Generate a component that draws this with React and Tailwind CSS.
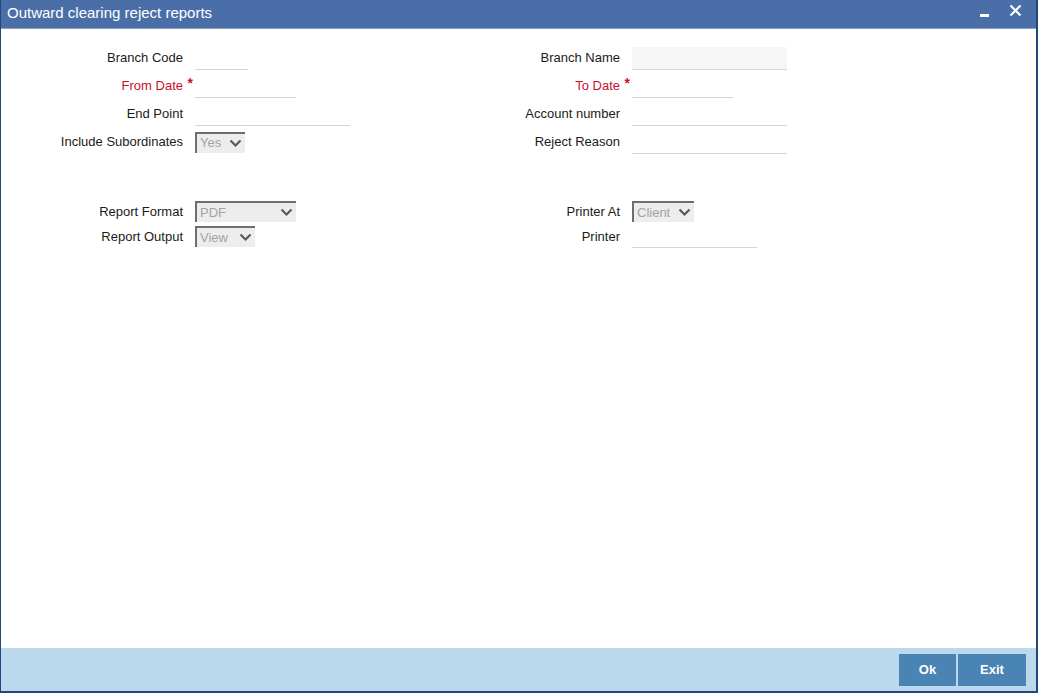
import React from 'react';

const font = { fontFamily: '"Liberation Sans", Arial, sans-serif' };

function Chevron() {
  return (
    <svg width="13" height="9" viewBox="0 0 13 9" className="shrink-0">
      <path d="M1.5 1.5 L6.5 6.5 L11.5 1.5" fill="none" stroke="#5a5a5a" strokeWidth="2.2" />
    </svg>
  );
}

function Select({ value, width }) {
  return (
    <div
      className="flex h-[21px] items-center justify-between border-t-2 border-l-2 border-t-[#6e6e6e] border-l-[#6e6e6e] bg-[#ededeb] pl-[3px] pr-[3px] text-[13px] text-[#a3a3a3]"
      style={{ width }}
    >
      <span>{value}</span>
      <Chevron />
    </div>
  );
}

function Input({ width, filled }) {
  return (
    <div
      className={`h-[23px] border-b border-[#d6d6d6] ${filled ? 'bg-[#f6f6f6]' : ''}`}
      style={{ width }}
    />
  );
}

function Row({ label, required, children, h = 'h-[28px]' }) {
  return (
    <div className={`flex ${h} items-center`}>
      <div className={`relative w-[182px] text-right text-[13px] ${required ? 'text-[#c8102e]' : 'text-[#1a1a1a]'}`}>
        {label}
        {required && <span className="absolute -right-[10px] -top-[3px] text-[14px] font-bold text-[#c8102e]">*</span>}
      </div>
      <div className="ml-[12px]">{children}</div>
    </div>
  );
}

export default function App() {
  return (
    <div className="flex h-[693px] w-[1038px] flex-col overflow-hidden border-b-2 border-l border-r-2 border-[#23467c] bg-white" style={font}>
      <div className="flex h-[29px] shrink-0 items-center justify-between border-b border-[#8aa0b8] bg-[#4a6fa8] pl-[6px] pr-[14px]">
        <span className="-mt-[2px] text-[15px] text-white">Outward clearing reject reports</span>
        <div className="flex items-center gap-[20px]">
          <div className="mt-[2px] h-[3px] w-[9px] bg-white" />
          <svg width="13" height="13" viewBox="0 0 13 13" className="-mt-[8px]">
            <path d="M1.5 1.5 L11.5 11.5 M11.5 1.5 L1.5 11.5" stroke="white" strokeWidth="2.2" />
          </svg>
        </div>
      </div>

      <div className="flex-1 pt-[15px]">
        <div className="flex">
          <div className="w-[437px]">
            <Row label="Branch Code"><Input width={53} /></Row>
            <Row label="From Date" required><Input width={101} /></Row>
            <Row label="End Point"><Input width={155} /></Row>
            <Row label="Include Subordinates"><Select value="Yes" width={50} /></Row>
          </div>
          <div className="w-[437px]">
            <Row label="Branch Name"><Input width={155} filled /></Row>
            <Row label="To Date" required><Input width={101} /></Row>
            <Row label="Account number"><Input width={155} /></Row>
            <Row label="Reject Reason"><Input width={155} /></Row>
          </div>
        </div>

        <div className="mt-[43px] flex">
          <div className="w-[437px]">
            <Row label="Report Format" h="h-[25px]"><Select value="PDF" width={101} /></Row>
            <Row label="Report Output" h="h-[25px]"><Select value="View" width={60} /></Row>
          </div>
          <div className="w-[437px]">
            <Row label="Printer At" h="h-[25px]"><Select value="Client" width={62} /></Row>
            <Row label="Printer" h="h-[25px]"><Input width={125} /></Row>
          </div>
        </div>
      </div>

      <div className="flex h-[43px] shrink-0 items-start justify-end gap-[2px] bg-[#bcd8ec] pr-[10px] pt-[6px]">
        <button className="h-[32px] w-[57px] bg-[#4a84b4] text-[13px] font-bold text-white">Ok</button>
        <button className="h-[32px] w-[68px] bg-[#4a84b4] text-[13px] font-bold text-white">Exit</button>
      </div>
    </div>
  );
}
